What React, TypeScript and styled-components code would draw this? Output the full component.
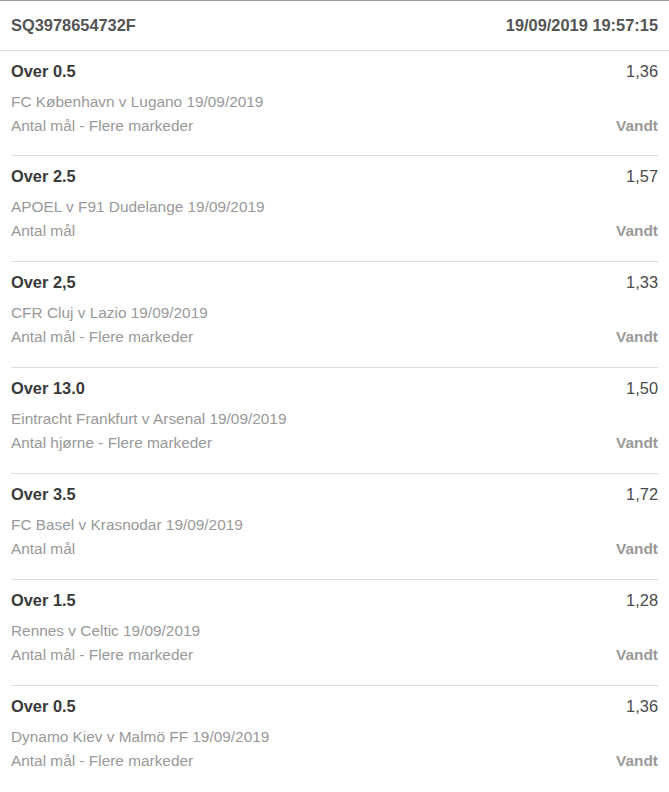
import { createGlobalStyle } from 'styled-components'
import styled from 'styled-components'

const bets = [
	{ title: 'Over 0.5', odds: '1,36', match: 'FC København v Lugano 19/09/2019', market: 'Antal mål - Flere markeder' },
	{ title: 'Over 2.5', odds: '1,57', match: 'APOEL v F91 Dudelange 19/09/2019', market: 'Antal mål' },
	{ title: 'Over 2,5', odds: '1,33', match: 'CFR Cluj v Lazio 19/09/2019', market: 'Antal mål - Flere markeder' },
	{ title: 'Over 13.0', odds: '1,50', match: 'Eintracht Frankfurt v Arsenal 19/09/2019', market: 'Antal hjørne - Flere markeder' },
	{ title: 'Over 3.5', odds: '1,72', match: 'FC Basel v Krasnodar 19/09/2019', market: 'Antal mål' },
	{ title: 'Over 1.5', odds: '1,28', match: 'Rennes v Celtic 19/09/2019', market: 'Antal mål - Flere markeder' },
	{ title: 'Over 0.5', odds: '1,36', match: 'Dynamo Kiev v Malmö FF 19/09/2019', market: 'Antal mål - Flere markeder' },
]

export default function App() {
	return (
		<>
			<GlobalStyle />
			<Slip>
				<Header>
					<HeaderText>SQ3978654732F</HeaderText>
					<HeaderText>19/09/2019 19:57:15</HeaderText>
				</Header>
				<List>
					{bets.map((bet, i) => (
						<Bet key={i}>
							<Row>
								<Title>{bet.title}</Title>
								<Odds>{bet.odds}</Odds>
							</Row>
							<Match>{bet.match}</Match>
							<Row>
								<Match>{bet.market}</Match>
								<Status>Vandt</Status>
							</Row>
						</Bet>
					))}
				</List>
			</Slip>
		</>
	)
}

const GlobalStyle = createGlobalStyle`
	body {
		margin: 0;
		background: #fff;
		font-family: 'Liberation Sans', Arial, sans-serif;
	}
`

const Slip = styled.div`
	width: 669px;
	border-top: 1px solid #999;
`

const Header = styled.div`
	display: flex;
	justify-content: space-between;
	align-items: center;
	height: 49px;
	padding: 0 11px;
	border-bottom: 1px solid #ddd;
`

const HeaderText = styled.span`
	font-size: 16.4px;
	font-weight: bold;
	color: #555;
`

const List = styled.div`
	padding: 0 11px;
`

const Bet = styled.div`
	padding: 11px 0 18px;
	border-bottom: 1px solid #ddd;

	&:first-child {
		padding-bottom: 17px;
	}

	&:last-child {
		border-bottom: none;
	}
`

const Row = styled.div`
	display: flex;
	justify-content: space-between;
	align-items: center;
`

const Title = styled.span`
	font-size: 16.4px;
	line-height: 18px;
	font-weight: bold;
	color: #3a3a3a;
	margin-bottom: 10px;
`

const Odds = styled.span`
	font-size: 16.4px;
	line-height: 18px;
	color: #4a4a4a;
	margin-bottom: 10px;
`

const Match = styled.div`
	font-size: 15.4px;
	line-height: 24px;
	color: #999;
`

const Status = styled.span`
	font-size: 15.4px;
	font-weight: bold;
	color: #999;
`
